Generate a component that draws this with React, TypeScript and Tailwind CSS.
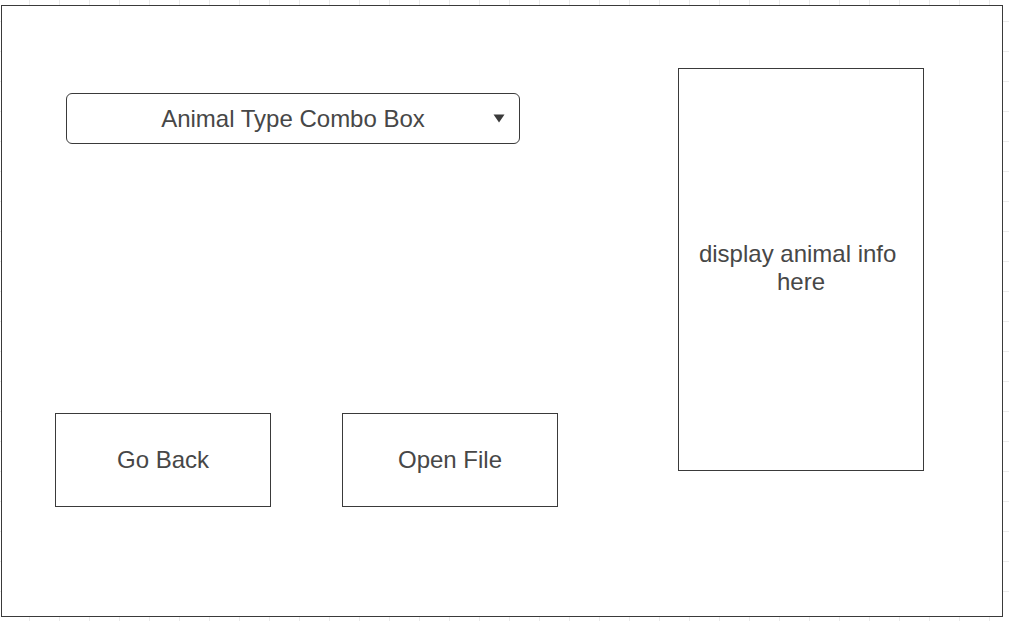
import React from "react";

export default function App() {
  return (
    <div
      className="w-[1009px] h-[621px] overflow-hidden bg-white pt-[5px] pl-[1px] bg-[linear-gradient(to_right,#ebebeb_1px,transparent_1px),linear-gradient(to_bottom,#ebebeb_1px,transparent_1px)] bg-[size:30px_30px] bg-[position:29px_21px]"
      style={{ fontFamily: '"Liberation Sans", Arial, sans-serif' }}
    >
      <div className="w-[1002px] h-[612px] border border-[#3a3a3a] bg-white flex text-[#474747] text-[24px]">
        <div className="flex flex-col pl-[53px] w-[676px]">
          <div className="relative ml-[11px] mt-[87px] w-[454px] h-[51px] border border-[#3a3a3a] rounded-[6px] flex items-center justify-center">
            <span>Animal Type Combo Box</span>
            <svg
              className="absolute right-[14px] top-[20px]"
              width="12"
              height="9"
              viewBox="0 0 12 9"
            >
              <path d="M0.5 0.5 L11.5 0.5 L6 8.5 Z" fill="#3a3a3a" />
            </svg>
          </div>
          <div className="flex mt-[269px] gap-[71px]">
            <div className="w-[216px] h-[94px] border border-[#3a3a3a] flex items-center justify-center">
              Go Back
            </div>
            <div className="w-[216px] h-[94px] border border-[#3a3a3a] flex items-center justify-center">
              Open File
            </div>
          </div>
        </div>
        <div className="mt-[62px] w-[246px] h-[403px] border border-[#3a3a3a] flex items-center justify-center text-center px-[8px] pb-[4px] leading-[28px]">
          <span>
            display animal info{"\u00a0"}
            <br />
            here
          </span>
        </div>
      </div>
    </div>
  );
}
